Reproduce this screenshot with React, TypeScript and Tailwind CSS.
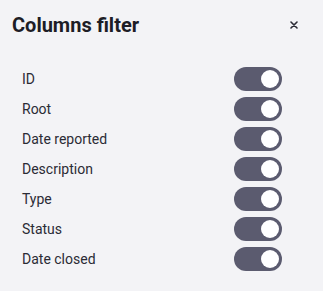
const columns = ['ID', 'Root', 'Date reported', 'Description', 'Type', 'Status', 'Date closed'];

function Toggle() {
  return (
    <div className="flex h-6 w-12 items-center justify-end rounded-full bg-[#5b5b6f] pr-[3px]">
      <div className="h-[18px] w-[18px] rounded-full bg-white" />
    </div>
  );
}

export default function App() {
  return (
    <div
      className="h-[291px] w-[323px] bg-[#f3f3f6] text-[#2b2b35]"
      style={{ fontFamily: 'Roboto, "Liberation Sans", sans-serif' }}
    >
      <header className="flex items-center justify-between pl-3 pr-[25px] pt-[12px]">
        <h1 className="text-[20px] font-bold leading-[26px] text-[#1d1d26]">Columns filter</h1>
        <svg width="8" height="8" viewBox="0 0 8 8" className="text-[#2b2b35]">
          <path d="M1 1L7 7M7 1L1 7" stroke="currentColor" strokeWidth="1.6" strokeLinecap="round" />
        </svg>
      </header>
      <ul className="mt-[29px] flex flex-col gap-[6px] pl-[22px] pr-[41px]">
        {columns.map((c) => (
          <li key={c} className="flex h-6 items-center justify-between">
            <span className="text-[14px]">{c}</span>
            <Toggle />
          </li>
        ))}
      </ul>
    </div>
  );
}
